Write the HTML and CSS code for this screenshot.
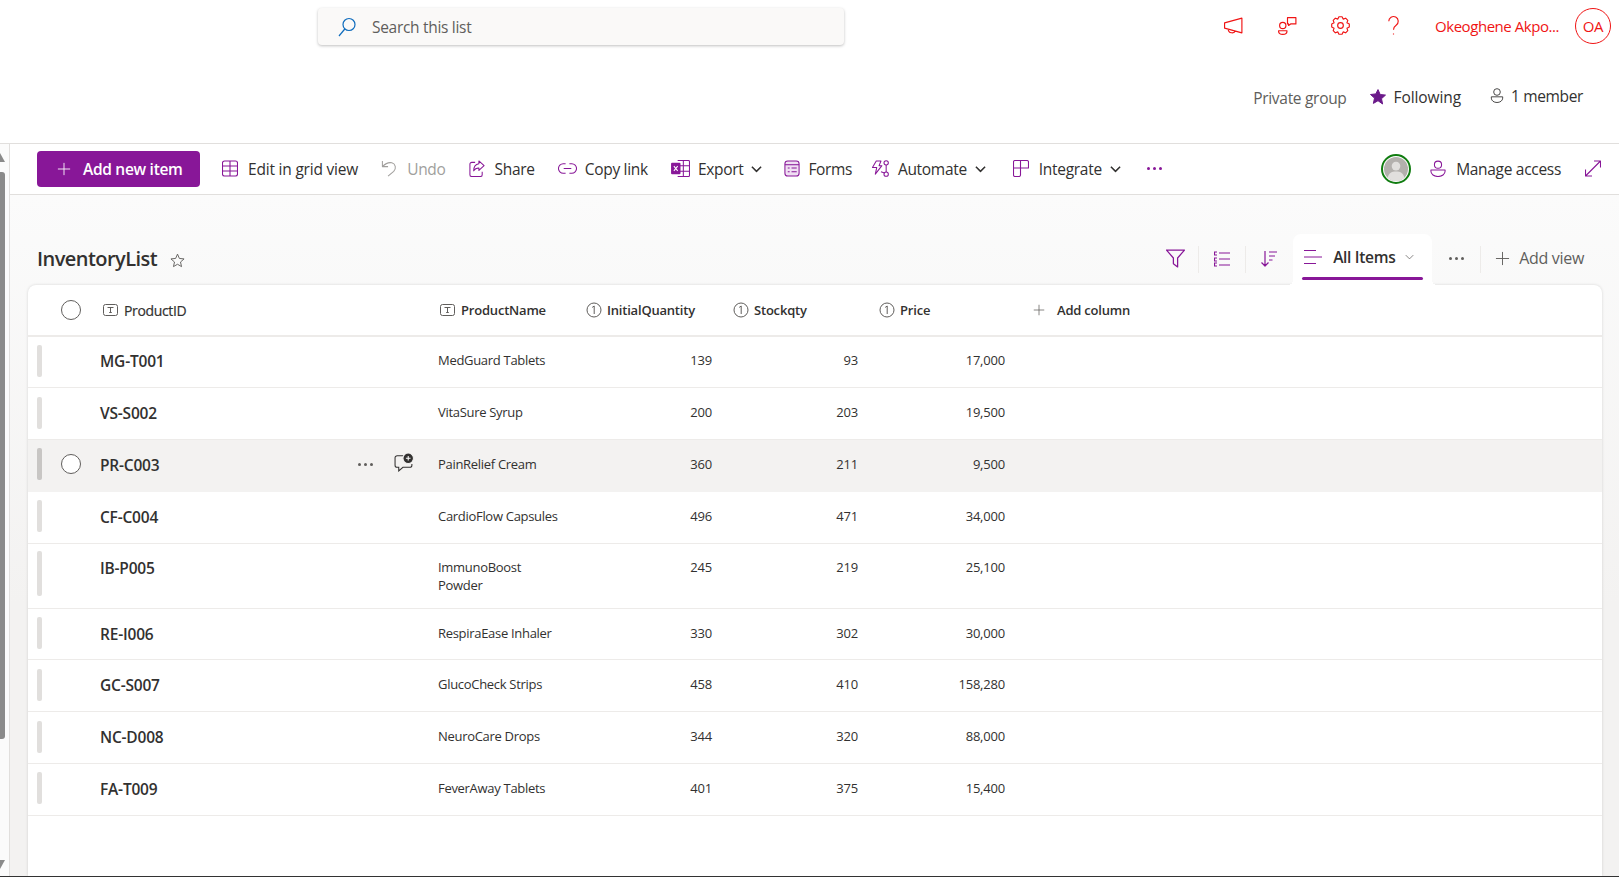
FILE: index.html
```html
<!DOCTYPE html>
<html>
<head>
    <meta charset="UTF-8">
    <title>InventoryList</title>
    <link rel="stylesheet" href="styles.css">
</head>
<body>
    <svg class="defs" width="0" height="0">
        <symbol id="i-text" viewBox="0 0 15 12">
            <rect x="0.5" y="0.5" width="14" height="11" rx="2"/>
            <path d="M4.5 3.5h6M7.5 3.5v5M6.2 8.5h2.6"/>
        </symbol>
        <symbol id="i-num" viewBox="0 0 16 16">
            <circle cx="8" cy="8" r="7"/>
            <path d="M6.2 5.4L8.2 4v8"/>
        </symbol>
        <symbol id="i-plus" viewBox="0 0 16 16">
            <path d="M8 1v14M1 8h14"/>
        </symbol>
        <symbol id="i-chev" viewBox="0 0 12 8">
            <path d="M1 1.5l5 5 5-5"/>
        </symbol>
    </svg>

    <div class="top">
        <div class="topbar">
            <div class="search">
                <svg class="search-icon" viewBox="0 0 18 20"><circle cx="11" cy="7.5" r="6"/><path d="M6.8 12L1 19"/></svg>
                <span>Search this list</span>
            </div>
            <div class="suite">
                <svg class="suite-icon" viewBox="0 0 20 20"><path d="M1.5 7.5L18 3v14L1.5 12.5zM5 13.5c0 4 6 4.500 6.500 1.500"/></svg>
                <svg class="suite-icon" viewBox="0 0 20 20"><circle cx="5.500" cy="10" r="3"/><path d="M1.500 15h8v.5c0 2-1.500 3-4 3s-4-1-4-3zM10 2.500h8v6h-5l-2 1.500v-1.500h-1z"/></svg>
                <svg class="suite-icon" viewBox="0 0 20 20"><path d="M18.370 8.520V11.480L16.100 12.530 16.960 14.880 14.880 16.960 12.530 16.100 11.480 18.370H8.520L7.470 16.100 5.120 16.960 3.040 14.880 3.900 12.530 1.630 11.480V8.520L3.900 7.470 3.040 5.120 5.120 3.040 7.470 3.900 8.520 1.630H11.480L12.530 3.900 14.880 3.040 16.960 5.120 16.100 7.470z"/><circle cx="10" cy="10" r="2.700"/></svg>
                <svg class="suite-icon" viewBox="0 0 20 20"><path d="M5.500 6a4.500 4.500 0 1 1 7 3.700c-1.600 1.100-2.500 2-2.500 4.300M10 17.500v1"/></svg>
                <span class="user-name">Okeoghene Akpo...</span>
                <span class="user-badge">OA</span>
            </div>
        </div>
        <div class="groupbar">
            <span class="private">Private group</span>
            <span class="following">
                <svg class="star-solid" viewBox="0 0 16 16"><path d="M8 .6l2.200 4.900 5.300.6-4 3.600 1.100 5.300L8 11.700l-4.600 2.700 1.100-5.300-4-3.600 5.300-.6z"/></svg>
                Following
            </span>
            <span class="members">
                <svg class="member-icon" viewBox="0 0 16 18"><circle cx="8" cy="5" r="3.800"/><path d="M1.500 10.500h13v1.500c0 3-3 5-6.500 5s-6.500-2-6.500-5z"/></svg>
                1 member
            </span>
        </div>
    </div>

    <div class="body">
        <div class="rail">
            <div class="rail-up"></div>
            <div class="rail-thumb"></div>
            <div class="rail-down"></div>
        </div>
        <div class="main">
            <div class="toolbar">
                <button class="add-btn"><svg class="add-plus" viewBox="0 0 16 16"><use href="#i-plus"/></svg>Add new item</button>
                <span class="tool tool-edit">
                    <svg class="tool-icon" viewBox="0 0 16 16"><rect x="0.500" y="0.500" width="15" height="15" rx="2"/><path d="M0.500 5.500h15M0.500 10.500h15M8 0.500v15"/></svg>
                    Edit in grid view
                </span>
                <span class="tool disabled">
                    <svg class="tool-icon" viewBox="0 0 16 18"><path d="M1 1v6h6M1 7c3-3 6-5 10-4 4 1 5 6 2 9l-6 5"/></svg>
                    Undo
                </span>
                <span class="tool">
                    <svg class="tool-icon" viewBox="0 0 16 18"><path d="M6 2.500H2.500a2 2 0 0 0-2 2v11a2 2 0 0 0 2 2h9a2 2 0 0 0 2-2v-3"/><path d="M10 1l5.500 5-5.500 5V8.500c-2.500 0-4.500 1-5.500 3 0-4 2-7 5.500-7.500z"/></svg>
                    Share
                </span>
                <span class="tool">
                    <svg class="tool-icon wide" viewBox="0 0 20 12"><path d="M8 1H5.500a5 5 0 0 0 0 10H8M12 1h2.500a5 5 0 0 1 0 10H12M6 6h8"/></svg>
                    Copy link
                </span>
                <span class="tool">
                    <svg class="tool-icon wide" viewBox="0 0 20 18"><path d="M7 .5h11.500a1 1 0 0 1 1 1v15a1 1 0 0 1-1 1H7M7 6h12.500M7 12h12.500M13 .5v17"/><rect class="excel-box" x="0" y="3" width="10" height="12" rx="1"/><path class="excel-x" d="M3 6.500l4 5M7 6.500l-4 5"/></svg>
                    Export
                    <svg class="tool-chev" viewBox="0 0 12 8"><use href="#i-chev"/></svg>
                </span>
                <span class="tool tool-forms">
                    <svg class="tool-icon" viewBox="0 0 16 18"><rect class="forms-box" x="0.500" y="1" width="15" height="16" rx="3"/><path d="M0.500 5h15"/><path d="M3.500 8.500h2M3.500 12.500h2M7.500 8.500h5.500M7.500 12.500h5.500"/></svg>
                    Forms
                </span>
                <span class="tool">
                    <svg class="tool-icon wide" viewBox="0 0 19 18"><path d="M5 1h5L8 6h3l-7 9 1.500-7H1z"/><circle cx="15.500" cy="3" r="2.300"/><circle cx="15.500" cy="15" r="2.300"/><path d="M15.500 5.300v7.400M10 12.500l3.800 1.200"/></svg>
                    Automate
                    <svg class="tool-chev" viewBox="0 0 12 8"><use href="#i-chev"/></svg>
                </span>
                <span class="tool tool-integrate">
                    <svg class="tool-icon" viewBox="0 0 16 17"><path d="M7.500 .5h6.500a1.500 1.500 0 0 1 1.500 1.500v6h-8zM7.500 .5H2A1.500 1.500 0 0 0 .5 2v13A1.500 1.500 0 0 0 2 16.500h4a1.500 1.500 0 0 0 1.500-1.500V8M.5 8h7"/></svg>
                    Integrate
                    <svg class="tool-chev" viewBox="0 0 12 8"><use href="#i-chev"/></svg>
                </span>
                <span class="tool-more"><i></i><i></i><i></i></span>
                <span class="tool-right">
                    <span class="presence"><svg viewBox="0 0 25 25"><circle cx="12.500" cy="12.500" r="12.500" fill="#b3b0ad"/><circle cx="12.500" cy="9.500" r="4.500" fill="#e1dfdd"/><path d="M4 22c0-5 4-7 8.500-7s8.500 2 8.500 7a12.500 12.500 0 0 1-17 0z" fill="#e1dfdd"/></svg></span>
                    <span class="tool tool-manage">
                        <svg class="tool-icon" viewBox="0 0 16 18"><circle cx="8" cy="5" r="3.800"/><path d="M.5 10.500h15v1.500c0 3-3.300 5.500-7.500 5.500S.5 15 .5 12z"/></svg>
                        Manage access
                    </span>
                    <svg class="tool-icon expand" viewBox="0 0 16 16"><path d="M.5 15.500l15-15M9 .5h6.500V7M.5 9v6.500H7"/></svg>
                </span>
            </div>

            <div class="content">
                <div class="title-row">
                    <h1 class="list-title">InventoryList</h1>
                    <svg class="fav-star" viewBox="0 0 16 16"><path d="M8 1.200l2 4.600 5 .5-3.800 3.300 1.100 4.900L8 12l-4.300 2.500 1.100-4.900L1 6.300l5-.5z"/></svg>
                    <div class="view-tools">
                        <svg class="view-icon filter" viewBox="0 0 18 18"><path d="M.5 1h17l-6.500 7.500V17l-4-3v-5.500z"/></svg>
                        <span class="sep"></span>
                        <svg class="view-icon small" viewBox="0 0 16 15"><path d="M5 1.500h11M5 7.500h11M5 13.500h11M3 .5H.5v3H3M3 6.500H.5v3H3M3 11.500H.5v3H3"/></svg>
                        <span class="sep"></span>
                        <svg class="view-icon small" viewBox="0 0 16 16"><path d="M4 0v15M.5 11.500L4 15l3.500-3.500M8 1h8M8 5h6M8 9h3.500"/></svg>
                        <div class="view-tab">
                            <svg class="tab-lines" viewBox="0 0 18 14"><path d="M0 .5h12M0 7h18M0 13.500h12"/></svg>
                            <span class="tab-name">All Items</span>
                            <svg class="tab-chev" viewBox="0 0 12 8"><use href="#i-chev"/></svg>
                        </div>
                        <span class="view-more"><i></i><i></i><i></i></span>
                        <span class="sep"></span>
                        <svg class="add-view-icon" viewBox="0 0 16 16"><use href="#i-plus"/></svg>
                        <span class="add-view">Add view</span>
                    </div>
                </div>

                <div class="card">
                    <div class="grid head">
                        <div class="cell-select"><span class="check"></span></div>
                        <div class="col col-id"><svg class="col-icon" viewBox="0 0 15 12"><use href="#i-text"/></svg>ProductID</div>
                        <div class="col"><svg class="col-icon" viewBox="0 0 15 12"><use href="#i-text"/></svg>ProductName</div>
                        <div class="col col-num"><svg class="col-num-icon" viewBox="0 0 16 16"><use href="#i-num"/></svg>InitialQuantity</div>
                        <div class="col col-num"><svg class="col-num-icon" viewBox="0 0 16 16"><use href="#i-num"/></svg>Stockqty</div>
                        <div class="col col-num"><svg class="col-num-icon" viewBox="0 0 16 16"><use href="#i-num"/></svg>Price</div>
                        <div class="col col-add"><svg class="col-plus" viewBox="0 0 16 16"><use href="#i-plus"/></svg>Add column</div>
                    </div>

                    <div class="grid row">
                        <div class="cell-select"><span class="handle"></span></div>
                        <div class="cell-id">MG-T001</div>
                        <div class="cell-name">MedGuard Tablets</div>
                        <div class="cell-n">139</div><div class="cell-n">93</div><div class="cell-n">17,000</div>
                    </div>
                    <div class="grid row">
                        <div class="cell-select"><span class="handle"></span></div>
                        <div class="cell-id">VS-S002</div>
                        <div class="cell-name">VitaSure Syrup</div>
                        <div class="cell-n">200</div><div class="cell-n">203</div><div class="cell-n">19,500</div>
                    </div>
                    <div class="grid row hover">
                        <div class="cell-select"><span class="handle"></span><span class="check"></span></div>
                        <div class="cell-id">PR-C003
                            <span class="row-actions">
                                <span class="row-more"><i></i><i></i><i></i></span>
                                <svg class="comment" viewBox="0 0 19 18"><path d="M9 2.500H3a2 2 0 0 0-2 2v7a2 2 0 0 0 2 2h1.500v3.500l4-3.500H15a2 2 0 0 0 2-2v-1"/><circle class="comment-dot" cx="13.500" cy="5" r="5"/><path class="comment-plus" d="M13.500 2.800v4.400M11.300 5h4.400"/></svg>
                            </span>
                        </div>
                        <div class="cell-name">PainRelief Cream</div>
                        <div class="cell-n">360</div><div class="cell-n">211</div><div class="cell-n">9,500</div>
                    </div>
                    <div class="grid row">
                        <div class="cell-select"><span class="handle"></span></div>
                        <div class="cell-id">CF-C004</div>
                        <div class="cell-name">CardioFlow Capsules</div>
                        <div class="cell-n">496</div><div class="cell-n">471</div><div class="cell-n">34,000</div>
                    </div>
                    <div class="grid row tall">
                        <div class="cell-select"><span class="handle"></span></div>
                        <div class="cell-id">IB-P005</div>
                        <div class="cell-name">ImmunoBoost<br>Powder</div>
                        <div class="cell-n">245</div><div class="cell-n">219</div><div class="cell-n">25,100</div>
                    </div>
                    <div class="grid row">
                        <div class="cell-select"><span class="handle"></span></div>
                        <div class="cell-id">RE-I006</div>
                        <div class="cell-name">RespiraEase Inhaler</div>
                        <div class="cell-n">330</div><div class="cell-n">302</div><div class="cell-n">30,000</div>
                    </div>
                    <div class="grid row">
                        <div class="cell-select"><span class="handle"></span></div>
                        <div class="cell-id">GC-S007</div>
                        <div class="cell-name">GlucoCheck Strips</div>
                        <div class="cell-n">458</div><div class="cell-n">410</div><div class="cell-n">158,280</div>
                    </div>
                    <div class="grid row">
                        <div class="cell-select"><span class="handle"></span></div>
                        <div class="cell-id">NC-D008</div>
                        <div class="cell-name">NeuroCare Drops</div>
                        <div class="cell-n">344</div><div class="cell-n">320</div><div class="cell-n">88,000</div>
                    </div>
                    <div class="grid row">
                        <div class="cell-select"><span class="handle"></span></div>
                        <div class="cell-id">FA-T009</div>
                        <div class="cell-name">FeverAway Tablets</div>
                        <div class="cell-n">401</div><div class="cell-n">375</div><div class="cell-n">15,400</div>
                    </div>
                </div>
            </div>
        </div>
    </div>
</body>
</html>
```

FILE: styles.css
```css
* {
    box-sizing: border-box;
}
html, body {
    height: 100%;
}
body {
    margin: 0;
    font-family: "Open Sans", "Noto Sans", sans-serif;
    font-size: 14px;
    letter-spacing: -0.3px;
    color: #323130;
    background: #fff;
    overflow: hidden;
    display: flex;
    flex-direction: column;
    border-bottom: 1px solid #333;
}
svg {
    fill: none;
    stroke: currentColor;
    flex: none;
}
.defs {
    position: absolute;
}

/* header */
.top {
    height: 144px;
    flex: none;
    border-bottom: 1px solid #e1dfdd;
}
.topbar {
    display: flex;
    align-items: flex-start;
    padding: 8px 8px 0 318px;
    height: 72px;
}
.search {
    width: 526px;
    height: 37px;
    background: #faf9f8;
    border-radius: 4px;
    box-shadow: 0 1px 3px rgba(0,0,0,0.25);
    display: flex;
    align-items: center;
    padding-left: 20px;
    font-size: 15.500px;
    color: #605e5c;
}
.search-icon {
    width: 18px;
    height: 20px;
    color: #0f6cbd;
    margin-right: 16px;
    stroke-width: 1.2;
}
.suite {
    margin-left: auto;
    display: flex;
    align-items: center;
    color: #f01414;
    height: 36px;
}
.suite-icon {
    width: 21px;
    height: 21px;
    margin-right: 32px;
    stroke-width: 1.1;
    stroke-linejoin: round;
    position: relative;
    top: -1px;
}
.suite-icon:first-child {
    margin-right: 33px;
}
.user-name {
    font-size: 15px;
    letter-spacing: -0.45px;
    margin-left: -1px;
    width: 140px;
}
.user-badge {
    width: 36px;
    height: 36px;
    border-radius: 50%;
    border: 1px solid #f01414;
    display: flex;
    align-items: center;
    justify-content: center;
    font-size: 15px;
}
.groupbar {
    display: flex;
    justify-content: flex-end;
    align-items: center;
    padding: 0 36px 0 0;
    height: 47px;
    font-size: 15.500px;
}
.private {
    color: #605e5c;
    position: relative;
    top: 2px;
}
.following {
    display: flex;
    align-items: center;
    margin-left: 23px;
    gap: 8px;
    letter-spacing: -0.1px;
    position: relative;
    top: 1px;
}
.star-solid {
    width: 16px;
    height: 16px;
    fill: #6b1a8a;
    stroke: #6b1a8a;
}
.members {
    display: flex;
    align-items: center;
    margin-left: 29px;
    gap: 7px;
    letter-spacing: -0.35px;
}
.member-icon {
    width: 14px;
    height: 17px;
}

/* body */
.body {
    flex: 1;
    display: flex;
    min-height: 0;
}
.rail {
    width: 10px;
    flex: none;
    border-right: 1px solid #e1dfdd;
    background: #fbfbfb;
    padding-top: 9px;
}
.rail-up, .rail-down {
    width: 0;
    height: 0;
    border-right: 5px solid transparent;
}
.rail-up {
    border-bottom: 9px solid #8a8a8a;
}
.rail-thumb {
    width: 5px;
    height: 567px;
    margin: 10px 0 121px;
    background: #8a8a8a;
    border-radius: 0 3px 3px 0;
}
.rail-down {
    border-top: 9px solid #8a8a8a;
}
.main {
    flex: 1;
    min-width: 0;
    display: flex;
    flex-direction: column;
}

/* command bar */
.toolbar {
    height: 51px;
    flex: none;
    display: flex;
    align-items: center;
    padding: 0 18px 1px 27px;
    gap: 23px;
    border-bottom: 1px solid #e1dfdd;
    font-size: 15.500px;
    letter-spacing: -0.3px;
}
.add-btn {
    width: 163px;
    height: 36px;
    border: 0;
    border-radius: 4px;
    background: #881798;
    color: #fff;
    font-family: inherit;
    font-size: 15.500px;
    letter-spacing: -0.3px;
    font-weight: 600;
    display: flex;
    align-items: center;
    padding-left: 20px;
    margin-right: -1px;
}
.add-plus {
    width: 14px;
    height: 14px;
    margin-right: 12px;
}
.tool {
    display: flex;
    align-items: center;
    gap: 10px;
    white-space: nowrap;
}
.tool-edit {
    letter-spacing: -0.2px;
}
.tool-icon {
    width: 16px;
    height: 17px;
    color: #881798;
    stroke-width: 1.1;
    stroke-linejoin: round;
}
.tool-icon.wide {
    width: 19px;
    margin-right: -2px;
}
.tool.disabled {
    color: #a19f9d;
}
.tool.disabled .tool-icon {
    color: #a19f9d;
}
.tool-chev {
    width: 11px;
    height: 8px;
    stroke-width: 1.7;
    margin-left: -2px;
}
.tool-forms {
    gap: 8px;
    letter-spacing: -0.4px;
    margin: 0 -4px 0 -1px;
}
.tool-integrate {
    margin-left: 4px;
    margin-right: 3px;
}
.tool-manage {
    letter-spacing: -0.3px;
}
.excel-box {
    fill: #881798;
    stroke: none;
}
.excel-x {
    stroke: #fff;
}
.forms-box {
    fill: #f0dff3;
}
.tool-more, .view-more, .row-more {
    display: flex;
    gap: 3px;
}
.tool-more i, .view-more i, .row-more i {
    width: 3px;
    height: 3px;
    border-radius: 50%;
    background: #881798;
}
.tool-right {
    margin-left: auto;
    display: flex;
    align-items: center;
}
.presence {
    width: 30px;
    height: 30px;
    border: 2px solid #107c10;
    border-radius: 50%;
    padding: 1px;
    margin-right: 19px;
}
.presence svg {
    display: block;
    width: 100%;
    height: 100%;
    stroke: none;
}
.tool-icon.expand {
    margin-left: 24px;
    width: 16px;
}

/* list area */
.content {
    flex: 1;
    min-height: 0;
    padding: 0 17px 0 18px;
    background: linear-gradient(to bottom, #fbfbfb, #f3f2f1 60%);
    display: flex;
    flex-direction: column;
}
.title-row {
    height: 90px;
    flex: none;
    display: flex;
    align-items: flex-end;
    padding-left: 9px;
    position: relative;
}
.list-title {
    margin: 0 13px 13px 0;
    font-size: 20px;
    font-weight: 600;
    letter-spacing: -0.55px;
    line-height: 27px;
}
.fav-star {
    width: 15px;
    height: 15px;
    margin-bottom: 17px;
    color: #605e5c;
}
.view-tools {
    margin-left: auto;
    display: flex;
    align-items: center;
    height: 51px;
    padding-right: 18px;
    position: relative;
}
.view-icon {
    width: 19px;
    height: 19px;
    color: #881798;
    stroke-width: 1.2;
    stroke-linejoin: round;
    margin-top: -2px;
}
.view-icon.filter {
    margin-right: -2px;
}
.view-icon.small {
    width: 16px;
    height: 16px;
}
.sep {
    width: 1px;
    height: 27px;
    background: #edebe9;
    margin: 0 15px;
}
.view-tab {
    width: 139px;
    height: 51px;
    margin-left: 16px;
    background: #fff;
    border-radius: 8px 8px 0 0;
    display: flex;
    align-items: center;
    padding: 0 0 5px 11px;
    position: relative;
}
.view-tab::before {
    content: "";
    position: absolute;
    left: -5px;
    right: -5px;
    bottom: 0;
    height: 5px;
    background:
        radial-gradient(circle at 0 0, transparent 5px, #fff 5px) left / 5px 5px no-repeat,
        radial-gradient(circle at 100% 0, transparent 5px, #fff 5px) right / 5px 5px no-repeat;
}
.view-tab::after {
    content: "";
    position: absolute;
    left: 9px;
    right: 9px;
    bottom: 5px;
    height: 3px;
    border-radius: 2px;
    background: #881798;
}
.tab-lines {
    width: 18px;
    height: 14px;
    color: #881798;
    margin-right: 11px;
}
.tab-name {
    font-size: 15.500px;
    font-weight: 600;
    margin-right: 10px;
}
.tab-chev {
    width: 9px;
    height: 6px;
    color: #605e5c;
}
.view-more {
    margin-left: 17px;
    margin-top: -2px;
}
.view-more i {
    background: #605e5c;
}
.view-more + .sep {
    margin: 0 14px 0 16px;
}
.add-view-icon {
    width: 15px;
    height: 15px;
    color: #605e5c;
    margin-top: -2px;
}
.add-view {
    margin: -3px 0 0 9px;
    font-size: 16px;
    color: #605e5c;
}

/* table */
.card {
    flex: 1;
    min-height: 0;
    background: #fff;
    border-radius: 8px 8px 0 0;
    box-shadow: 0 0 3px rgba(0,0,0,0.15);
}
.grid {
    display: grid;
    grid-template-columns: 72px 337px 140px 147px 146px 147px 1fr;
    align-items: center;
}
.head {
    height: 51.500px;
    padding-top: 1px;
    border-bottom: 2px solid #edebe9;
    font-weight: 600;
    font-size: 13px;
    letter-spacing: -0.2px;
}
.row {
    height: 51.800px;
    border-bottom: 1px solid #edebe9;
    padding-bottom: 2px;
}
.row.tall {
    height: 65px;
    align-items: start;
    padding-top: 15px;
}
.row.hover {
    background: #f3f2f1;
    border-bottom-color: #f3f2f1;
}
.cell-select {
    position: relative;
    height: 32px;
    display: flex;
    align-items: center;
    padding-left: 33px;
}
.check {
    width: 20px;
    height: 20px;
    border-radius: 50%;
    border: 1px solid #605e5c;
    background: #fff;
}
.handle {
    position: absolute;
    left: 9px;
    top: 0;
    width: 5px;
    height: 32px;
    border-radius: 2px;
    background: #e1dfdd;
}
.row.hover .handle {
    background: #c8c6c4;
}
.row.tall .cell-select {
    height: 50px;
    margin-top: -8px;
}
.row.tall .handle {
    height: 45px;
}
.col {
    display: flex;
    align-items: center;
    padding-left: 3px;
    white-space: nowrap;
}
.col-id {
    font-weight: 400;
    font-size: 14px;
    letter-spacing: -0.35px;
    -webkit-text-stroke: 0.2px #323130;
}
.col-num {
    padding-left: 9px;
}
.col-add {
    padding-left: 16px;
}
.col-icon {
    width: 15px;
    height: 12px;
    margin-right: 6px;
    color: #605e5c;
}
.col-num-icon {
    width: 16px;
    height: 16px;
    margin-right: 5px;
    color: #605e5c;
}
.col-plus {
    width: 12px;
    height: 12px;
    margin-right: 12px;
    color: #605e5c;
}
.cell-id {
    font-size: 15.500px;
    font-weight: 600;
    display: flex;
    align-items: center;
    letter-spacing: -0.2px;
    margin-top: 1px;
}
.row.tall .cell-id {
    margin-top: -2px;
}
.row-actions {
    margin-left: auto;
    display: flex;
    align-items: center;
    padding-right: 23px;
    gap: 21px;
}
.row-more i {
    background: #605e5c;
}
.comment {
    width: 20px;
    height: 19px;
    color: #323130;
    margin-top: -5px;
}
.comment-dot {
    fill: #323130;
    stroke: #f3f2f1;
}
.comment-plus {
    stroke: #fff;
}
.cell-name {
    font-size: 13px;
    line-height: 18px;
    padding-left: 1px;
    margin-top: -1px;
}
.cell-n {
    font-size: 13px;
    letter-spacing: -0.2px;
    text-align: right;
    padding-right: 12px;
    margin-top: -1px;
}
```
